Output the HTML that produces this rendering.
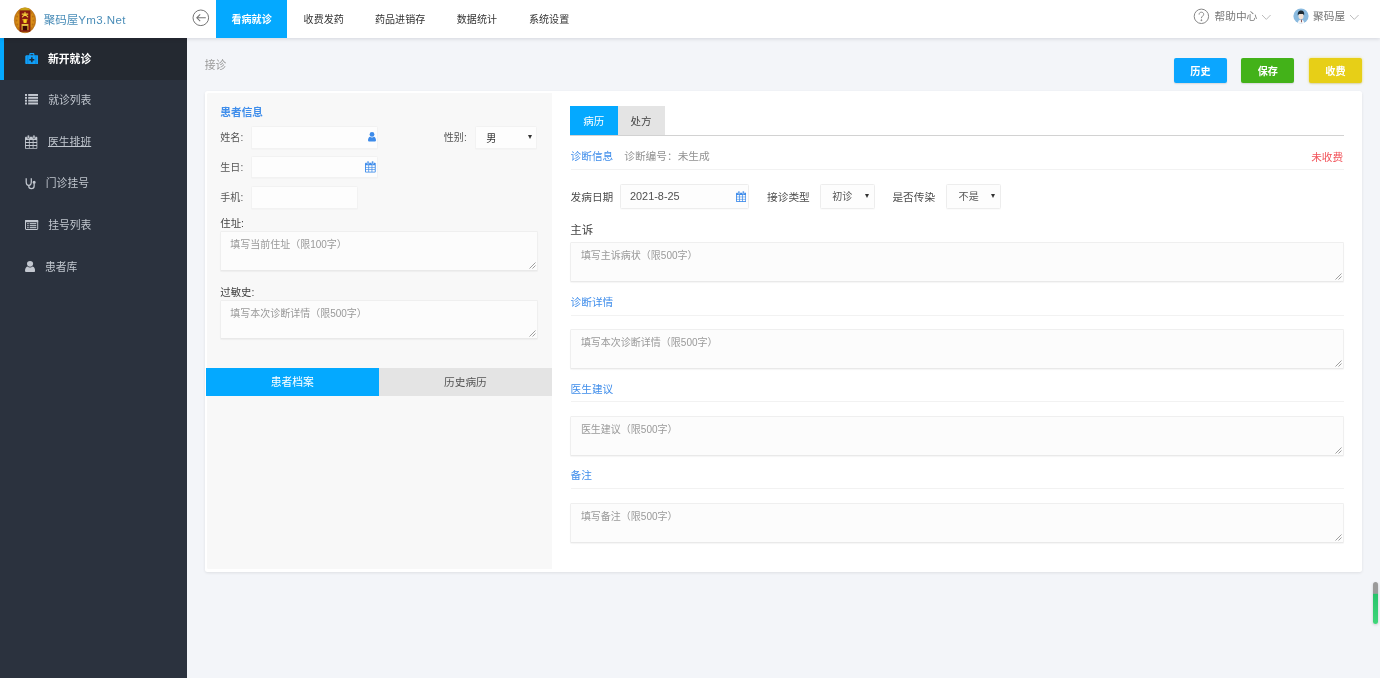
<!DOCTYPE html>
<html lang="zh-CN">
<head>
<meta charset="utf-8">
<title>接诊</title>
<style>
*{box-sizing:border-box;margin:0;padding:0}
html,body{width:1380px;height:678px;overflow:hidden}
#pg{position:absolute;left:0;top:0;width:1380px;height:678px;will-change:transform}
body{background:#f3f5f9;font-family:"Liberation Sans","Noto Sans CJK SC",sans-serif;font-size:10px;color:#444;position:relative}
.abs{position:absolute}
.t{position:absolute;white-space:nowrap;line-height:16px;height:16px}
/* header */
#hd{position:absolute;left:0;top:0;width:1380px;height:38px;background:#fff;box-shadow:0 1px 4px rgba(0,10,30,.13);z-index:5}
#logo-t{left:43.7px;top:9.5px;font-size:11.5px;color:#4a8db8;line-height:20px;height:20px}
.nav{position:absolute;top:0;height:38px;line-height:40px;font-size:10.06px;color:#333;white-space:nowrap}
.nav.on{background:#04a9ff;color:#fff;font-weight:bold;text-align:center}
.hr{font-size:10.7px;color:#777;line-height:20px;height:20px;top:6px}
/* sidebar */
#sb{position:absolute;left:0;top:38px;width:187px;height:640px;background:#2b323e}
.mi{position:absolute;left:0;width:187px;height:41.6px}
.mi.on{background:#242931}
.mi.on:before{content:"";position:absolute;left:0;top:0;width:3.6px;height:100%;background:#04a9ff}
.mi .tx{position:absolute;top:0.7px;line-height:41px;height:41.6px;font-size:10.8px;color:#c0c6ce;white-space:nowrap}
.mi.on .tx{color:#fff;font-weight:bold}
.mi svg{position:absolute}
/* content */
#crumb{left:204.8px;top:56.5px;font-size:10.8px;color:#999}
.btn{position:absolute;top:58px;width:53.3px;height:24.5px;border-radius:2px;box-shadow:0 1px 1.5px rgba(0,0,0,.12);color:#fff;font-weight:bold;font-size:10.1px;text-align:center;line-height:27.6px}
#card{position:absolute;left:204.9px;top:90.9px;width:1157.3px;height:480.8px;background:#fff;border-radius:2.5px;box-shadow:0 1px 3px rgba(0,0,0,.09)}
#lp{position:absolute;left:207.4px;top:93.3px;width:344.6px;height:475.6px;background:#f8f8f8;border-radius:1.5px 0 0 1.5px}
.blue{color:#408eeb}
.inp{position:absolute;background:#fdfdfd;border:1px solid #f2f2f2;border-radius:1.5px;box-shadow:0 1px 1px rgba(0,0,0,.02)}
.ta{position:absolute;background:#fcfcfc;border:1px solid #efefef;border-bottom-color:#e9e9e9;border-radius:1.5px;box-shadow:0 1px 1px rgba(0,0,0,.04)}
.ph{position:absolute;left:9px;top:5.6px;font-size:10px;line-height:14px;color:#999;white-space:nowrap}
.lb{font-size:10.06px;color:#555}
.dv{position:absolute;left:570.5px;width:773px;height:1px;background:#f2f2f2}
.arr{position:absolute;width:0;height:0;border-left:2.4px solid transparent;border-right:2.4px solid transparent;border-top:4.2px solid #333}
.grip{position:absolute;right:1px;bottom:1px;width:7px;height:7px}
</style>
</head>
<body>
<div id="pg">

<!-- ============ HEADER ============ -->
<div id="hd">
  <svg class="abs" style="left:13px;top:6px" width="24" height="28" viewBox="0 0 24 28">
    <defs><radialGradient id="lg" cx="50%" cy="48%" r="58%"><stop offset="0" stop-color="#eaa01e"/><stop offset=".7" stop-color="#d58a16"/><stop offset="1" stop-color="#b3620b"/></radialGradient></defs>
    <ellipse cx="12" cy="14.3" rx="10.7" ry="12.5" fill="url(#lg)" stroke="#a9600c" stroke-width=".5"/>
    <g fill="#a35a0a" opacity=".55"><circle cx="4.2" cy="10.5" r=".9"/><circle cx="3.6" cy="14.5" r=".9"/><circle cx="4.4" cy="18.5" r=".9"/><circle cx="19.8" cy="10.5" r=".9"/><circle cx="20.4" cy="14.5" r=".9"/><circle cx="19.6" cy="18.5" r=".9"/><circle cx="5.6" cy="7" r=".7"/><circle cx="18.4" cy="7" r=".7"/><circle cx="5.8" cy="22" r=".7"/><circle cx="18.2" cy="22" r=".7"/></g>
    <path d="M7 5.2L7.8 2.6C10 1.6 14 1.6 16.2 2.6L17 5.2Z" fill="#c9a116"/>
    <rect x="6.9" y="4.8" width="10.2" height="20.6" fill="#8c1d11" stroke="#74140a" stroke-width=".5"/>
    <g stroke="#f1cf3a" stroke-width="1.15" fill="none" stroke-linecap="round"><path d="M9.2 8.1H14.8M12 6.3V8.3L9.5 10.9M12.1 8.3L14.7 10.9"/></g>
    <path d="M9.4 13.2H14.6V14.3H13.4L13.6 16.9H10.6L11 14.3H9.4Z" fill="#f3cb1e"/>
    <circle cx="12" cy="15" r="1.7" fill="#f6d21f"/>
    <path d="M9.1 24.2V18.6H14.9V24.2" fill="#3c0a05" stroke="#e0b42a" stroke-width="1.1"/>
    <rect x="9.1" y="18.1" width="5.8" height="1.8" fill="#e7c546"/>
  </svg>
  <div class="t" id="logo-t">聚码屋<span style="letter-spacing:.42px">Ym3.Net</span></div>

  <svg class="abs" style="left:192px;top:9px" width="18" height="18" viewBox="0 0 18 18" fill="none" stroke="#747474" stroke-width="1">
    <circle cx="8.8" cy="8.8" r="7.8"/>
    <path d="M13.8 8.8H5M8.2 5.4L4.8 8.8L8.2 12.2" stroke-width="1.05"/>
  </svg>

  <div class="nav on" style="left:216px;width:71.2px">看病就诊</div>
  <div class="nav" style="left:303.6px">收费发药</div>
  <div class="nav" style="left:375px">药品进销存</div>
  <div class="nav" style="left:456.8px">数据统计</div>
  <div class="nav" style="left:529px">系统设置</div>

  <svg class="abs" style="left:1193px;top:8px" width="17" height="17" viewBox="0 0 17 17" fill="none" stroke="#868686" stroke-width="1">
    <circle cx="8.4" cy="8.3" r="7.2"/>
    <path d="M6.1 6.6C6.1 5 7.1 4.2 8.4 4.2C9.8 4.2 10.7 5.1 10.7 6.3C10.7 7.9 8.4 8.2 8.4 10.2"/>
    <circle cx="8.4" cy="12.2" r="0.5" fill="#777"/>
  </svg>
  <div class="t hr" style="left:1214.5px">帮助中心</div>
  <svg class="abs" style="left:1261px;top:14px" width="11" height="7" viewBox="0 0 11 7" fill="none" stroke="#bbb" stroke-width="1"><path d="M1 1L5.3 5.4L9.6 1"/></svg>

  <svg class="abs" style="left:1292.6px;top:7.5px" width="16" height="16" viewBox="0 0 16 16">
    <defs><clipPath id="avc"><circle cx="8" cy="8" r="7.6"/></clipPath></defs>
    <circle cx="8" cy="8" r="7.6" fill="#8abadf"/>
    <g clip-path="url(#avc)">
      <path d="M4.6 16C4.8 13 5.8 11.6 8 11.4C10.2 11.6 11.2 13 11.4 16Z" fill="#f5f6f8"/>
      <ellipse cx="8" cy="8.3" rx="2.5" ry="3" fill="#f2e2d6"/>
      <path d="M4.9 7.6C4.3 4 6 2.4 8.1 2.4C10.4 2.4 11.7 4.2 11.1 7.6C10.6 6.2 9.6 5.9 8 6.1C6.4 5.9 5.4 6.3 4.9 7.6Z" fill="#1d2a33"/>
      <path d="M7.8 11.6L8.3 14.6L9 14L8.6 11.6Z" fill="#6d2b2b"/>
    </g>
  </svg>
  <div class="t hr" style="left:1313px">聚码屋</div>
  <svg class="abs" style="left:1349px;top:14px" width="11" height="7" viewBox="0 0 11 7" fill="none" stroke="#bbb" stroke-width="1"><path d="M1 1L5.3 5.4L9.6 1"/></svg>
</div>

<!-- ============ SIDEBAR ============ -->
<div id="sb">
  <div class="mi on" style="top:0">
    <svg style="left:24.7px;top:14.7px" width="13.7" height="11.3" viewBox="0 0 14 12"><path fill="#12a0f8" d="M4.3 2.4V1.2C4.3 .5 4.8 0 5.5 0H8.5C9.2 0 9.7 .5 9.7 1.2V2.4H12.6C13.4 2.4 14 3 14 3.8V10.6C14 11.4 13.4 12 12.6 12H1.4C.6 12 0 11.4 0 10.6V3.8C0 3 .6 2.4 1.4 2.4ZM5.5 1.2V2.4H8.5V1.2Z"/><rect x="2.2" y="2.4" width="1" height="9.6" fill="#0b86d8"/><rect x="10.8" y="2.4" width="1" height="9.6" fill="#0b86d8"/><path fill="#1d2a3a" d="M6.2 4.6H7.8V6.4H9.6V8H7.8V9.8H6.2V8H4.4V6.4H6.2Z"/></svg>
    <div class="tx" style="left:48px">新开就诊</div>
  </div>
  <div class="mi" style="top:41.6px">
    <svg style="left:24.9px;top:14.9px" width="13.5" height="10.5" viewBox="0 0 13.6 10.7" preserveAspectRatio="none" fill="#c3c8d0"><rect x="0" y="0" width="2" height="2"/><rect x="3.2" y="0" width="10.4" height="2"/><rect x="0" y="2.9" width="2" height="2"/><rect x="3.2" y="2.9" width="10.4" height="2"/><rect x="0" y="5.8" width="2" height="2"/><rect x="3.2" y="5.8" width="10.4" height="2"/><rect x="0" y="8.7" width="2" height="2"/><rect x="3.2" y="8.7" width="10.4" height="2"/></svg>
    <div class="tx" style="left:48.2px">就诊列表</div>
  </div>
  <div class="mi" style="top:83.2px">
    <svg style="left:25px;top:13.8px" width="13" height="14" viewBox="0 0 13 14"><rect x="0" y="1.8" width="12.3" height="12" rx=".9" fill="#c3c8d0"/><rect x="2.3" y="0" width="2.1" height="3.6" rx="1" fill="#c3c8d0" stroke="#2b323e" stroke-width=".5"/><rect x="7.9" y="0" width="2.1" height="3.6" rx="1" fill="#c3c8d0" stroke="#2b323e" stroke-width=".5"/><g fill="#2b323e"><rect x="0.9" y="5" width="3" height="2"/><rect x="4.7" y="5" width="3" height="2"/><rect x="8.5" y="5" width="3" height="2"/><rect x="0.9" y="8" width="3" height="2"/><rect x="4.7" y="8" width="3" height="2"/><rect x="8.5" y="8" width="3" height="2"/><rect x="0.9" y="11" width="3" height="2"/><rect x="4.7" y="11" width="3" height="2"/><rect x="8.5" y="11" width="3" height="2"/></g></svg>
    <div class="tx" style="left:48px;text-decoration:underline;text-decoration-thickness:.8px;text-underline-offset:.4px">医生排班</div>
  </div>
  <div class="mi" style="top:124.8px">
    <svg style="left:25px;top:15.2px" width="11" height="12" viewBox="0 0 11 12" fill="none" stroke="#c3c8d0" stroke-width="1.25"><path d="M1.2 .3V3.8C1.2 6 2.2 7.4 3.75 7.4C5.3 7.4 6.3 6 6.3 3.8V.3"/><path d="M3.75 7.4V8C3.75 9.8 4.8 10.7 6.45 10.7C8.1 10.7 9.15 9.8 9.15 8V5.2"/><circle cx="9.15" cy="4.3" r=".9" fill="#c3c8d0"/></svg>
    <div class="tx" style="left:45.8px">门诊挂号</div>
  </div>
  <div class="mi" style="top:166.4px">
    <svg style="left:25px;top:15.6px" width="14" height="11" viewBox="0 0 14 11"><rect x=".5" y=".5" width="12.2" height="9" rx=".5" fill="none" stroke="#c3c8d0" stroke-width="1"/><rect x="0" y="0" width="13.2" height="2.2" rx=".5" fill="#c3c8d0"/><g fill="#c3c8d0"><rect x="2.2" y="3.1" width="1.5" height="1.1"/><rect x="4.7" y="3.1" width="6.6" height="1.1"/><rect x="2.2" y="5.1" width="1.5" height="1.1"/><rect x="4.7" y="5.1" width="6.6" height="1.1"/><rect x="2.2" y="7.1" width="1.5" height="1.1"/><rect x="4.7" y="7.1" width="6.6" height="1.1"/></g></svg>
    <div class="tx" style="left:48.2px">挂号列表</div>
  </div>
  <div class="mi" style="top:208px">
    <svg style="left:24.9px;top:14.8px" width="10.1" height="11.3" viewBox="0 0 10 12" preserveAspectRatio="none" fill="#c3c8d0"><circle cx="5" cy="3" r="3"/><path d="M0 10.4C0 7.6 1.4 5.8 2.6 5.8C3.2 6.4 4 6.8 5 6.8C6 6.8 6.8 6.4 7.4 5.8C8.6 5.8 10 7.6 10 10.4C10 11.4 9.2 12 8.2 12H1.8C.8 12 0 11.4 0 10.4Z"/></svg>
    <div class="tx" style="left:45px">患者库</div>
  </div>
</div>

<!-- ============ CONTENT ============ -->
<div class="t" id="crumb">接诊</div>
<div class="btn" style="left:1173.8px;background:#0ba6ff">历史</div>
<div class="btn" style="left:1241.2px;background:#43b219">保存</div>
<div class="btn" style="left:1308.8px;background:#e7cf17;box-shadow:0 0 3px rgba(231,207,23,.55),0 1px 1.5px rgba(0,0,0,.12)">收费</div>

<div id="card"></div>
<div id="lp"></div>

<!-- left panel -->
<div class="t blue" style="left:220.3px;top:104.2px;font-size:10.7px;font-weight:bold">患者信息</div>

<div class="t lb" style="left:220.3px;top:129.9px">姓名:</div>
<div class="inp" style="left:251px;top:126.4px;width:127.2px;height:22.2px"></div>
<svg class="abs" style="left:367.5px;top:132.2px" width="8" height="9.6" viewBox="0 0 10 12" fill="#3d8bea"><circle cx="5" cy="3" r="3"/><path d="M0 10.4C0 7.6 1.4 5.8 2.6 5.8C3.2 6.4 4 6.8 5 6.8C6 6.8 6.8 6.4 7.4 5.8C8.6 5.8 10 7.6 10 10.4C10 11.4 9.2 12 8.2 12H1.8C.8 12 0 11.4 0 10.4Z"/></svg>

<div class="t lb" style="left:443.8px;top:129.9px">性别:</div>
<div class="inp" style="left:474.8px;top:126.4px;width:62.2px;height:22.2px"></div>
<div class="t" style="left:486.3px;top:131px;font-size:10.06px;color:#333">男</div>
<div class="arr" style="left:528px;top:135.2px"></div>

<div class="t lb" style="left:220.3px;top:160px">生日:</div>
<div class="inp" style="left:251px;top:156px;width:127.2px;height:22.4px"></div>
<svg class="abs cal" style="left:365px;top:161.3px" width="10.7" height="11.8" viewBox="0 0 13 15" preserveAspectRatio="none"><path fill="#3d8bea" d="M1 2.2H12C12.6 2.2 13 2.6 13 3.2V13.6C13 14.2 12.6 14.6 12 14.6H1C.4 14.6 0 14.2 0 13.6V3.2C0 2.6 .4 2.2 1 2.2Z"/><rect x="2.6" y="0" width="2.2" height="4" rx="1" fill="#3d8bea" stroke="#fcfcfc" stroke-width=".6"/><rect x="8.2" y="0" width="2.2" height="4" rx="1" fill="#3d8bea" stroke="#fcfcfc" stroke-width=".6"/><g fill="#fcfcfc"><rect x="1.1" y="5.4" width="3" height="2.2"/><rect x="5" y="5.4" width="3" height="2.2"/><rect x="8.9" y="5.4" width="3" height="2.2"/><rect x="1.1" y="8.4" width="3" height="2.2"/><rect x="5" y="8.4" width="3" height="2.2"/><rect x="8.9" y="8.4" width="3" height="2.2"/><rect x="1.1" y="11.4" width="3" height="2.2"/><rect x="5" y="11.4" width="3" height="2.2"/><rect x="8.9" y="11.4" width="3" height="2.2"/></g></svg>

<div class="t lb" style="left:220.3px;top:190px">手机:</div>
<div class="inp" style="left:251px;top:185.8px;width:106.6px;height:23px"></div>

<div class="t" style="left:220.3px;top:216.2px;font-size:10.4px;color:#444">住址:</div>
<div class="ta" style="left:220.2px;top:231px;width:317.4px;height:39.8px"><div class="ph">填写当前住址（限100字）</div>
  <svg class="grip" viewBox="0 0 7 7" stroke="#777" stroke-width=".7"><path d="M6.5 .5L.5 6.5M6.5 3.5L3.5 6.5"/></svg></div>

<div class="t" style="left:220.3px;top:284.5px;font-size:10.4px;color:#444">过敏史:</div>
<div class="ta" style="left:220.2px;top:300.1px;width:317.4px;height:39.4px"><div class="ph">填写本次诊断详情（限500字）</div>
  <svg class="grip" viewBox="0 0 7 7" stroke="#777" stroke-width=".7"><path d="M6.5 .5L.5 6.5M6.5 3.5L3.5 6.5"/></svg></div>

<div class="abs" style="left:205.9px;top:367.9px;width:172.9px;height:27.9px;background:#04a9ff;color:#fff;text-align:center;line-height:29.5px;font-size:10.8px">患者档案</div>
<div class="abs" style="left:378.8px;top:367.9px;width:173.2px;height:27.9px;background:#e4e4e4;color:#555;text-align:center;line-height:29.5px;font-size:10.7px">历史病历</div>

<!-- right panel -->
<div class="abs" style="left:570px;top:134.6px;width:773.5px;height:1px;background:#d2d2d2"></div>
<div class="abs" style="left:570px;top:106.3px;width:47.5px;height:28.6px;background:#04a9ff;color:#fff;text-align:center;line-height:30px;font-size:10.5px">病历</div>
<div class="abs" style="left:617.5px;top:106.3px;width:47.2px;height:28.4px;background:#e4e4e4;color:#444;text-align:center;line-height:30px;font-size:10.5px">处方</div>

<div class="t blue" style="left:570.5px;top:148.3px;font-size:10.7px">诊断信息</div>
<div class="t" style="left:624.2px;top:148.3px;font-size:10.7px;color:#929292">诊断编号：未生成</div>
<div class="t" style="right:36.8px;top:149.3px;font-size:10.7px;color:#f2545b">未收费</div>
<div class="dv" style="top:168.8px"></div>

<div class="t" style="left:570.5px;top:188.6px;font-size:10.7px;color:#4c4c4c">发病日期</div>
<div class="inp" style="left:620.3px;top:184.1px;width:128.6px;height:24.5px;border-color:#ededed"></div>
<div class="t" style="left:630px;top:188.4px;font-size:10.9px;color:#505050">2021-8-25</div>
<svg class="abs cal" style="left:736.1px;top:190.9px" width="10.2" height="11.2" viewBox="0 0 13 15" preserveAspectRatio="none"><path fill="#3d8bea" d="M1 2.2H12C12.6 2.2 13 2.6 13 3.2V13.6C13 14.2 12.6 14.6 12 14.6H1C.4 14.6 0 14.2 0 13.6V3.2C0 2.6 .4 2.2 1 2.2Z"/><rect x="2.6" y="0" width="2.2" height="4" rx="1" fill="#3d8bea" stroke="#fcfcfc" stroke-width=".6"/><rect x="8.2" y="0" width="2.2" height="4" rx="1" fill="#3d8bea" stroke="#fcfcfc" stroke-width=".6"/><g fill="#fcfcfc"><rect x="1.1" y="5.4" width="3" height="2.2"/><rect x="5" y="5.4" width="3" height="2.2"/><rect x="8.9" y="5.4" width="3" height="2.2"/><rect x="1.1" y="8.4" width="3" height="2.2"/><rect x="5" y="8.4" width="3" height="2.2"/><rect x="8.9" y="8.4" width="3" height="2.2"/><rect x="1.1" y="11.4" width="3" height="2.2"/><rect x="5" y="11.4" width="3" height="2.2"/><rect x="8.9" y="11.4" width="3" height="2.2"/></g></svg>

<div class="t" style="left:767px;top:188.6px;font-size:10.7px;color:#4c4c4c">接诊类型</div>
<div class="inp" style="left:819.6px;top:184.1px;width:55.2px;height:24.5px;border-color:#ededed"></div>
<div class="t" style="left:832.3px;top:188.6px;font-size:10.06px;color:#555">初诊</div>
<div class="arr" style="left:865.4px;top:194px"></div>

<div class="t" style="left:892.4px;top:188.6px;font-size:10.7px;color:#4c4c4c">是否传染</div>
<div class="inp" style="left:946px;top:184.1px;width:54.8px;height:24.5px;border-color:#ededed"></div>
<div class="t" style="left:958.6px;top:188.6px;font-size:10.06px;color:#555">不是</div>
<div class="arr" style="left:991.2px;top:194px"></div>

<div class="t" style="left:570.3px;top:222px;font-size:11.5px;color:#444">主诉</div>
<div class="ta" style="left:570.2px;top:242.2px;width:773.8px;height:39.8px"><div class="ph" style="left:9.7px">填写主诉病状（限500字）</div>
  <svg class="grip" viewBox="0 0 7 7" stroke="#777" stroke-width=".7"><path d="M6.5 .5L.5 6.5M6.5 3.5L3.5 6.5"/></svg></div>

<div class="t blue" style="left:570.5px;top:294px;font-size:10.7px">诊断详情</div>
<div class="dv" style="top:314.6px"></div>
<div class="ta" style="left:570.2px;top:329.2px;width:773.8px;height:39.8px"><div class="ph" style="left:9.7px">填写本次诊断详情（限500字）</div>
  <svg class="grip" viewBox="0 0 7 7" stroke="#777" stroke-width=".7"><path d="M6.5 .5L.5 6.5M6.5 3.5L3.5 6.5"/></svg></div>

<div class="t blue" style="left:570.5px;top:380.7px;font-size:10.7px">医生建议</div>
<div class="dv" style="top:401.2px"></div>
<div class="ta" style="left:570.2px;top:416.1px;width:773.8px;height:39.8px"><div class="ph" style="left:9.7px">医生建议（限500字）</div>
  <svg class="grip" viewBox="0 0 7 7" stroke="#777" stroke-width=".7"><path d="M6.5 .5L.5 6.5M6.5 3.5L3.5 6.5"/></svg></div>

<div class="t blue" style="left:570.5px;top:467.3px;font-size:10.7px">备注</div>
<div class="dv" style="top:487.8px"></div>
<div class="ta" style="left:570.2px;top:503px;width:773.8px;height:39.8px"><div class="ph" style="left:9.7px">填写备注（限500字）</div>
  <svg class="grip" viewBox="0 0 7 7" stroke="#777" stroke-width=".7"><path d="M6.5 .5L.5 6.5M6.5 3.5L3.5 6.5"/></svg></div>

<!-- floating bar -->
<div class="abs" style="left:1372.8px;top:581.8px;width:5px;height:42px;border-radius:2.5px;background:linear-gradient(#9a9a9a 0,#9a9a9a 27%,#27c46b 29%,#3fd67a 100%);box-shadow:0 1px 3px rgba(0,0,0,.18)"></div>

</div>
</body>
</html>
